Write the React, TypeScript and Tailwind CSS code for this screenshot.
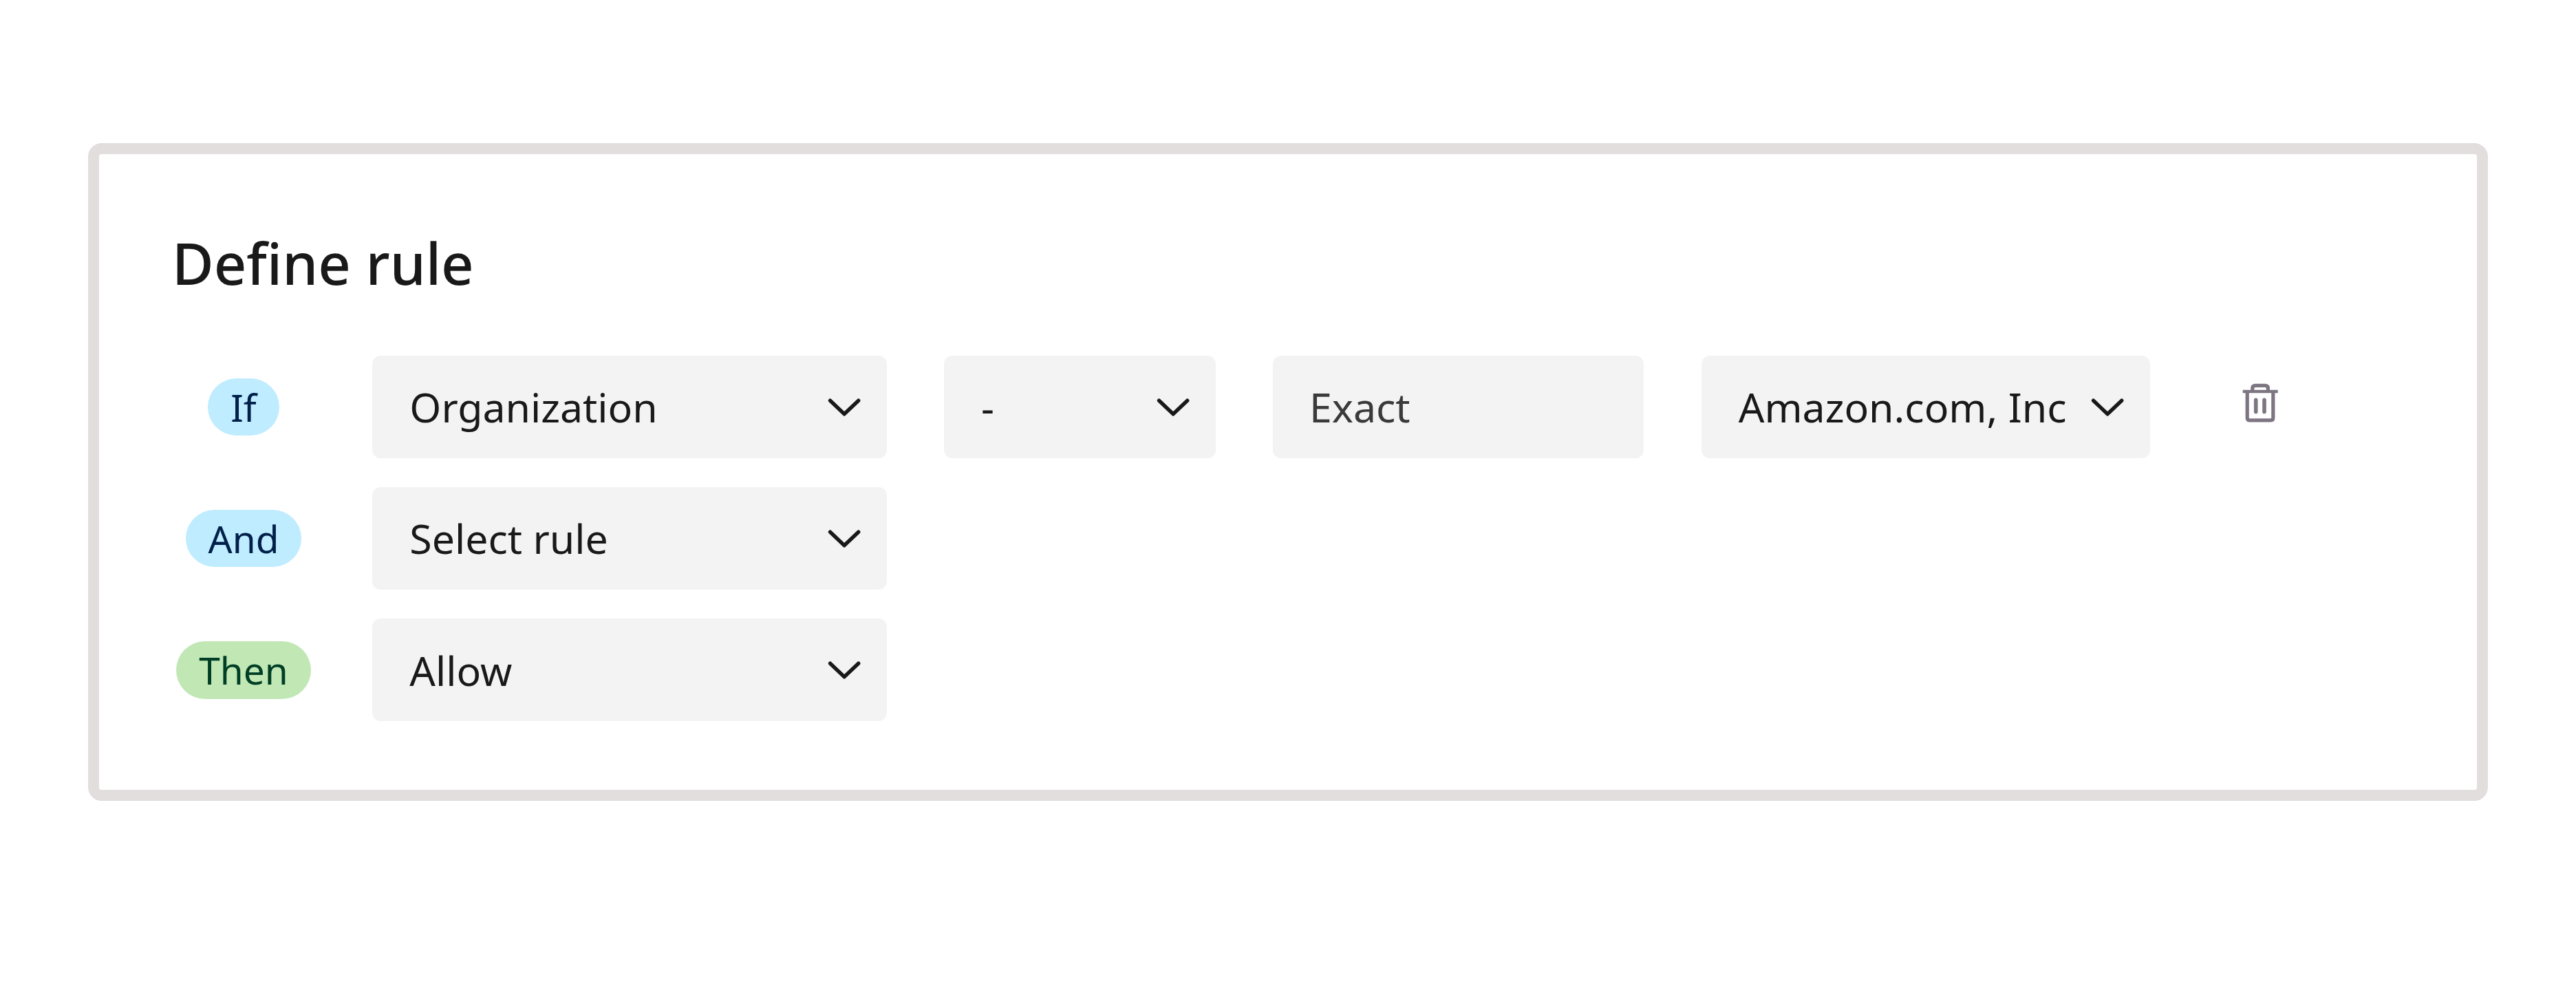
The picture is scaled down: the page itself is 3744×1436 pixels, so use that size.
import { ReactNode } from 'react'
import clsx from 'clsx'

interface FieldProps {
  children: ReactNode
  className: string
}

const ChevronIcon = () => (
  <svg className="h-9 w-[52px] shrink-0" viewBox="0 0 52 36" fill="none">
    <path
      d="M5.6 8.2 26.1 27.8 46.7 8.2"
      stroke="currentColor"
      strokeWidth="5.4"
      strokeLinecap="round"
      strokeLinejoin="round"
    />
  </svg>
)

const TrashIcon = () => (
  <svg className="h-16 w-[60px]" viewBox="0 0 60 64" fill="none" stroke="currentColor">
    {/* Lid and handle */}
    <path d="M4.7 16H55.7" strokeWidth="4.6" />
    <path d="M18.8 16V11.5C18.8 8.8 20.3 7.4 23 7.4H37.2C39.9 7.4 41.4 8.8 41.4 11.5V16" strokeWidth="5.2" />
    {/* Bin */}
    <path d="M11.2 16V54.2C11.2 56.6 12.5 57.9 14.9 57.9H45.1C47.5 57.9 48.8 56.6 48.8 54.2V16" strokeWidth="5.2" />
    <path d="M23.7 28.4V45.4M36 28.4V45.4" strokeWidth="5.6" strokeLinecap="round" />
  </svg>
)

const Select = ({ children, className }: FieldProps) => (
  <button
    type="button"
    className={clsx(
      'flex h-[149.3px] shrink-0 items-center justify-between rounded-xl bg-[#f3f3f3] pr-9 pl-[54px] text-[59px] text-[#191919]',
      className
    )}
  >
    <span className="whitespace-nowrap">{children}</span>
    <ChevronIcon />
  </button>
)

const StaticField = ({ children, className }: FieldProps) => (
  <div
    className={clsx(
      'flex h-[149.3px] shrink-0 items-center rounded-xl bg-[#f3f3f3] pl-[53px] text-[59px] text-[#3a3a3a]',
      className
    )}
  >
    {children}
  </div>
)

const Badge = ({ children, className }: FieldProps) => (
  <div className="flex w-52 shrink-0 justify-center">
    <span
      className={clsx(
        'flex h-[83.5px] items-center rounded-full px-[33px] text-[55px] leading-[75px]',
        className
      )}
    >
      {children}
    </span>
  </div>
)

const RuleRow = ({ children }: { children: ReactNode }) => (
  <div className="flex items-center gap-[83.3px]">{children}</div>
)

const App = () => {
  return (
    <div className="h-[1436px] w-[3744px] bg-white px-32 pt-52 font-['Noto_Sans',sans-serif]">
      <div className="h-[956px] rounded-[20px] border-16 border-[#e2dedd] pt-[101px] pl-[106px]">
        <h2 className="text-[83px] leading-[114px] font-medium text-[#191919]">Define rule</h2>

        <div className="mt-[78px] flex flex-col gap-[41.8px]">
          {/* Condition */}
          <RuleRow>
            <Badge className="bg-[#bfecff] text-[#00204a]">If</Badge>
            <Select className="w-[747.5px]">Organization</Select>
            <Select className="w-[394.5px]">-</Select>
            <StaticField className="w-[539.5px]">Exact</StaticField>
            <Select className="w-[652.3px]">Amazon.com, Inc</Select>
            <button type="button" aria-label="Delete" className="ml-[46.5px] pb-3.5 text-[#7d7582]">
              <TrashIcon />
            </button>
          </RuleRow>

          <RuleRow>
            <Badge className="bg-[#bfecff] text-[#00204a]">And</Badge>
            <Select className="w-[747.5px]">Select rule</Select>
          </RuleRow>

          {/* Action */}
          <RuleRow>
            <Badge className="bg-[#c1e7b5] text-[#003e25]">Then</Badge>
            <Select className="w-[747.5px]">Allow</Select>
          </RuleRow>
        </div>
      </div>
    </div>
  )
}

export default App
